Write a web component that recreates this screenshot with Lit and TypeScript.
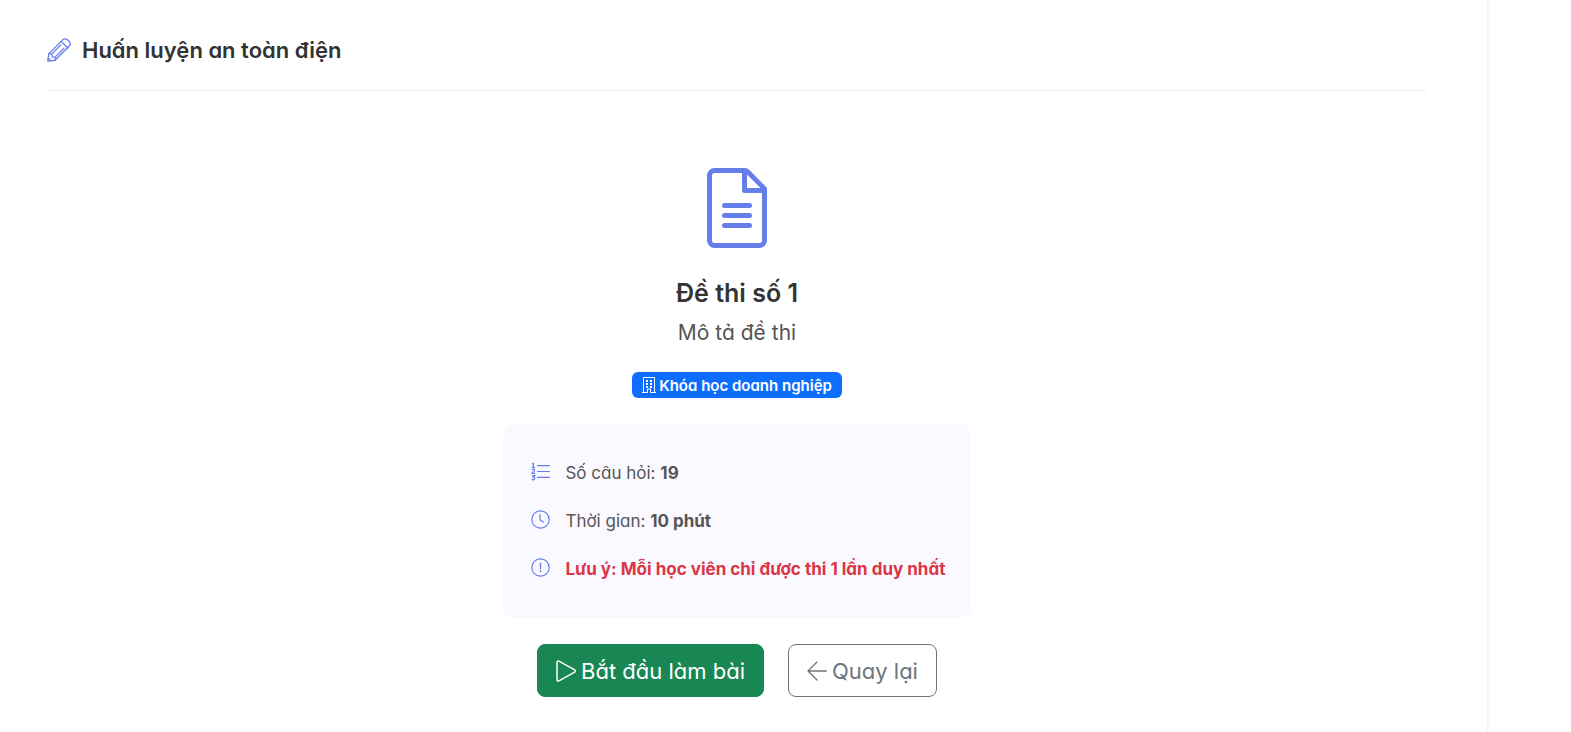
import { LitElement, html, css, svg } from "lit";
import { customElement } from "lit/decorators.js";

const icon = (name: string, body: unknown, viewBox = "0 0 16 16") =>
  html`<svg class="icon ${name}" viewBox=${viewBox} aria-hidden="true">${body}</svg>`;

const pencil = svg`<g fill="none" stroke="currentColor" stroke-width="1.3" stroke-linejoin="round" stroke-linecap="round">
  <path d="M.8 23.200 1.700 15.900 15.700 1.900c1.500-1.500 3.600-1.500 5 0l1.400 1.400c1.400 1.400 1.400 3.500 0 5L8.100 22.300z"/>
  <path d="M14.200 3.400l6.400 6.400M13.800 7 4.900 15.900M17 10.200 8.100 19.100M1.700 15.900l3.200 0 .3 2.900 2.900.3 0 3.200M1.200 20.200l2.600 2.600"/></g>`;

const file = svg`<g fill="currentColor"><path d="M5.500 7a.5.5 0 0 0 0 1h5a.5.5 0 0 0 0-1zM5 9.500a.5.5 0 0 1 .5-.5h5a.5.5 0 0 1 0 1h-5a.5.5 0 0 1-.5-.5m0 2a.5.5 0 0 1 .5-.5h5a.5.5 0 0 1 0 1h-5a.5.5 0 0 1-.5-.5"/>
  <path d="M9.500 0H3.500A1.500 1.500 0 0 0 2 1.500v13A1.500 1.500 0 0 0 3.500 16h9a1.500 1.500 0 0 0 1.500-1.500V4L10.500.4A1.400 1.400 0 0 0 9.500 0M9 1v3.500A.5.5 0 0 0 9.500 5H13v9.500a.5.5 0 0 1-.5.5h-9a.5.5 0 0 1-.5-.5v-13a.5.5 0 0 1 .5-.5zM10 1.300 12.700 4H10z"/></g>`;

const building = svg`<path fill="none" stroke="currentColor" d="M1.500 15.500V.5h11v15M0 15.500h5.500M8.500 15.500H14M5.500 15.500v-3.500h3v3.500"/>
  <path fill="none" stroke="currentColor" stroke-width="2" stroke-dasharray="2 1" d="M5 3v8M9 3v8"/>`;

const listOl = svg`<path fill="none" stroke="currentColor" stroke-linecap="round" d="M5.500 3h10M5.500 8h10M5.500 13h10"/>
  <path fill="none" stroke="currentColor" stroke-width="1" d="M.9 1.700 2 1.200v3.300M.6 4.500h2.700M.8 6.800c.5-1.100 2.300-1 2.200.1C2.900 7.900 1.400 8.500.9 9.500h2.500M.7 11.500h2.300L1.900 12.800c1.700 0 1.600 2.200.1 2.200-.6 0-1-.1-1.400-.5"/>`;

const clock = svg`<g fill="none" stroke="currentColor" stroke-linecap="round"><circle cx="8" cy="8" r="7.300"/><path d="M7.600 3.700v4.600l2.800 1.900"/></g>`;

const alert = svg`<circle cx="8" cy="8" r="7.300" fill="none" stroke="currentColor"/><path fill="currentColor" d="M7.300 4.300h1.400l-.3 5.100h-.8z"/><circle cx="8" cy="11.200" r=".8" fill="currentColor"/>`;

const play = svg`<path fill="none" stroke="currentColor" stroke-width="1.500" stroke-linejoin="round" d="M1 2.300v17.400c0 1.200.8 1.700 1.900 1.100l15.800-8.700c1-.6 1-1.600 0-2.200L2.900 1.200C1.800.6 1 1.100 1 2.300z"/>`;

const arrow = svg`<path fill="none" stroke="currentColor" stroke-width="1.300" stroke-linecap="round" stroke-linejoin="round" d="M19.300 11H1M10 2 1 11l9 9"/>`;

@customElement("app-root")
export class AppRoot extends LitElement {
  static styles = css`
    :host {
      display: block;
      font-family: Inter, "Open Sans", sans-serif;
      font-feature-settings: "cv11";
      color: #333;
      background: #fff;
    }
    * { box-sizing: border-box; }
    .page {
      min-height: 100vh;
      margin-right: 84px;
      padding: 32px 60px 32px 47px;
      background: #fff;
      box-shadow: 0 0 4px rgba(0, 0, 0, 0.14);
    }
    .icon { display: block; flex: none; }
    .header {
      display: flex;
      align-items: center;
      gap: 11px;
      padding-bottom: 22px;
      border-bottom: 1px solid #eee;
    }
    .header .icon { width: 24px; height: 24px; color: #667eea; }
    h1, h2, p, ul { margin: 0; }
    h1 { font-size: 22px; line-height: 36px; font-weight: 600; }
    .exam {
      display: flex;
      flex-direction: column;
      align-items: center;
      padding-top: 77px;
    }
    .file { width: 80px; height: 80px; color: #667eea; }
    h2 { margin-top: 25px; font-size: 25px; line-height: 40px; font-weight: 600; }
    .desc { margin-top: 4px; font-size: 21px; line-height: 32px; color: #555; }
    .badge {
      display: flex;
      align-items: center;
      gap: 3px;
      margin-top: 23px;
      height: 26px;
      padding: 0 10px;
      border-radius: 6px;
      background: #0d6efd;
      color: #fff;
      font-size: 15px;
      font-weight: 600;
    }
    .badge .icon { width: 14px; height: 16px; }
    .info {
      margin-top: 26px;
      padding: 25px 25px 25px 28px;
      border-radius: 10px;
      background: #faf9ff;
      list-style: none;
      font-size: 17px;
      line-height: 48px;
      color: #555;
    }
    .info li { display: flex; align-items: center; gap: 15px; }
    .info .icon { width: 19px; height: 19px; margin-bottom: 3px; color: #667eea; }
    .info strong { font-weight: 700; }
    .info .warn { color: #dc3545; }
    .actions { display: flex; gap: 24px; margin-top: 26px; }
    button {
      display: flex;
      align-items: center;
      gap: 5px;
      height: 53px;
      padding: 0 18px;
      border: 1px solid #198754;
      border-radius: 8px;
      background: #198754;
      color: #fff;
      font: inherit;
      font-feature-settings: inherit;
      font-size: 22px;
      cursor: pointer;
    }
    button .icon { width: 20px; height: 22px; }
    .back { border-color: #6c757d; background: #fff; color: #6c757d; }
  `;

  render() {
    return html`
      <main class="page">
        <header class="header">
          ${icon("pencil", pencil, "0 0 24 24")}
          <h1>Huấn luyện an toàn điện</h1>
        </header>
        <section class="exam">
          ${icon("file", file)}
          <h2>Đề thi số 1</h2>
          <p class="desc">Mô tả đề thi</p>
          <span class="badge">${icon("building", building, "0 0 14 16")}<span>Khóa học doanh nghiệp</span></span>
          <ul class="info">
            <li>${icon("list", listOl)}<span>Số câu hỏi: <strong>19</strong></span></li>
            <li>${icon("clock", clock)}<span>Thời gian: <strong>10 phút</strong></span></li>
            <li>${icon("alert", alert)}<strong class="warn">Lưu ý: Mỗi học viên chỉ được thi 1 lần duy nhất</strong></li>
          </ul>
          <div class="actions">
            <button type="button">${icon("play", play, "0 0 20 22")}<span>Bắt đầu làm bài</span></button>
            <button type="button" class="back">${icon("arrow", arrow, "0 0 20 22")}<span>Quay lại</span></button>
          </div>
        </section>
      </main>
    `;
  }
}
